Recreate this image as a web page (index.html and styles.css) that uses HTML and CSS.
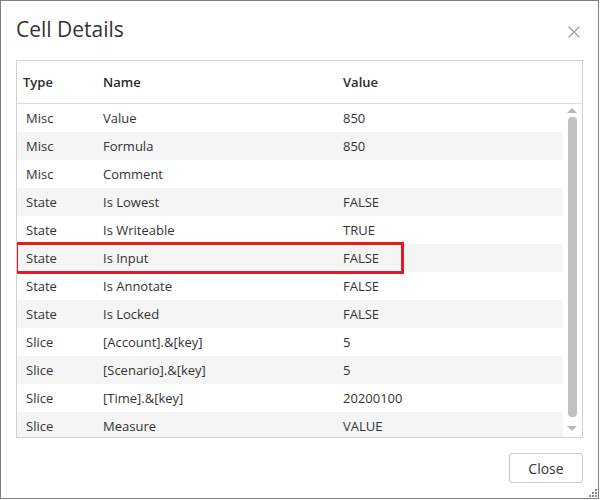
FILE: index.html
```
<!DOCTYPE html>
<html>
<head>
<meta charset="utf-8">
<link rel="stylesheet" href="styles.css">
</head>
<body>
<div class="dialog">
  <div class="dialog-header">
    <h1 class="title">Cell Details</h1>
    <button class="close-x" aria-label="Close">
      <svg width="12" height="12" viewBox="0 0 12 12"><path d="M0.5 0.5 L11.5 11.5 M11.5 0.5 L0.5 11.5" stroke="#9a9a9a" stroke-width="1.1" fill="none"/></svg>
    </button>
  </div>
  <div class="grid">
    <div class="grid-head">
      <div class="c-type">Type</div>
      <div class="c-name">Name</div>
      <div class="c-value">Value</div>
    </div>
    <div class="grid-body">
      <div class="rows">
        <div class="row"><div class="c-type">Misc</div><div class="c-name">Value</div><div class="c-value">850</div></div>
        <div class="row"><div class="c-type">Misc</div><div class="c-name">Formula</div><div class="c-value">850</div></div>
        <div class="row"><div class="c-type">Misc</div><div class="c-name">Comment</div><div class="c-value"></div></div>
        <div class="row"><div class="c-type">State</div><div class="c-name">Is Lowest</div><div class="c-value">FALSE</div></div>
        <div class="row"><div class="c-type">State</div><div class="c-name">Is Writeable</div><div class="c-value">TRUE</div></div>
        <div class="row"><div class="c-type">State</div><div class="c-name">Is Input</div><div class="c-value">FALSE</div></div>
        <div class="row"><div class="c-type">State</div><div class="c-name">Is Annotate</div><div class="c-value">FALSE</div></div>
        <div class="row"><div class="c-type">State</div><div class="c-name">Is Locked</div><div class="c-value">FALSE</div></div>
        <div class="row"><div class="c-type">Slice</div><div class="c-name">[Account].&amp;[key]</div><div class="c-value">5</div></div>
        <div class="row"><div class="c-type">Slice</div><div class="c-name">[Scenario].&amp;[key]</div><div class="c-value">5</div></div>
        <div class="row"><div class="c-type">Slice</div><div class="c-name">[Time].&amp;[key]</div><div class="c-value">20200100</div></div>
        <div class="row"><div class="c-type">Slice</div><div class="c-name">Measure</div><div class="c-value">VALUE</div></div>
      </div>
      <div class="scrollbar">
        <div class="arrow-up"></div>
        <div class="thumb"></div>
        <div class="arrow-down"></div>
      </div>
      <div class="highlight"></div>
    </div>
  </div>
  <div class="dialog-footer">
    <button class="btn">Close</button>
  </div>
  <svg class="grip" width="10" height="10" viewBox="0 0 10 10">
    <rect x="7" y="1" width="2" height="2" fill="#8a8a8a"/>
    <rect x="4" y="4" width="2" height="2" fill="#8a8a8a"/>
    <rect x="7" y="4" width="2" height="2" fill="#8a8a8a"/>
    <rect x="1" y="7" width="2" height="2" fill="#8a8a8a"/>
    <rect x="4" y="7" width="2" height="2" fill="#8a8a8a"/>
    <rect x="7" y="7" width="2" height="2" fill="#8a8a8a"/>
  </svg>
</div>
</body>
</html>
```
FILE: styles.css
```
html, body {
  margin: 0;
  padding: 0;
  background: #ffffff;
}
body {
  font-family: "Open Sans", "Noto Sans", Arial, sans-serif;
  color: #333333;
}
.dialog {
  position: relative;
  box-sizing: border-box;
  width: 599px;
  height: 499px;
  border: 1px solid #808080;
  background: #ffffff;
  display: flex;
  flex-direction: column;
  padding: 0 15px;
}
.dialog-header {
  height: 59px;
  display: flex;
  justify-content: space-between;
  align-items: flex-start;
  box-sizing: border-box;
  padding-top: 13px;
}
.title {
  margin: 0;
  font-size: 21px;
  font-weight: 400;
  line-height: 30px;
  color: #333333;
}
.close-x {
  border: 0;
  background: transparent;
  padding: 0;
  margin: 12px 3px 0 0;
  width: 12px;
  height: 12px;
  display: block;
}
.close-x svg { display: block; }
.grid {
  border: 1px solid #d2d2d2;
  display: flex;
  flex-direction: column;
  height: 378px;
  box-sizing: border-box;
}
.grid-head {
  height: 43px;
  box-sizing: border-box;
  border-bottom: 1px solid #dddddd;
  display: flex;
  align-items: center;
  font-weight: 600;
  font-size: 13px;
  color: #2b2b2b;
}
.grid-head .c-type { width: 80px; padding-left: 6px; }
.grid-head .c-name { width: 240px; }
.grid-body {
  position: relative;
  flex: 1;
  display: flex;
  overflow: hidden;
}
.rows {
  flex: 1;
}
.row {
  height: 28px;
  display: flex;
  align-items: center;
  font-size: 13px;
  color: #333333;
}
.row:nth-child(even) { background: #f5f5f5; }
.row .c-type { width: 77px; padding-left: 9px; }
.row .c-name { width: 240px; }
.scrollbar {
  width: 19px;
  display: flex;
  flex-direction: column;
  align-items: center;
  padding-top: 4px;
  box-sizing: border-box;
}
.arrow-up {
  width: 0; height: 0;
  border-left: 5px solid transparent;
  border-right: 5px solid transparent;
  border-bottom: 5px solid #b8b8b8;
  margin-left: -1px;
}
.thumb {
  margin-top: 4px;
  width: 9px;
  height: 300px;
  background: #c1c1c1;
  border-radius: 4px;
  margin-left: -1px;
}
.arrow-down {
  margin-top: 9px;
  width: 0; height: 0;
  border-left: 5px solid transparent;
  border-right: 5px solid transparent;
  border-top: 5px solid #b8b8b8;
  margin-left: -2px;
}
.highlight {
  position: absolute;
  left: -2px;
  top: 138px;
  width: 389px;
  height: 32px;
  box-sizing: border-box;
  border: 3px solid #e31b23;
  pointer-events: none;
}
.dialog-footer {
  flex: 1;
  display: flex;
  justify-content: flex-end;
  align-items: flex-start;
  padding-top: 15px;
}
.btn {
  width: 74px;
  height: 30px;
  border: 1px solid #c8c8c8;
  border-radius: 3px;
  background: #ffffff;
  font-family: "Open Sans", "Noto Sans", Arial, sans-serif;
  font-size: 14px;
  color: #333333;
  padding: 0;
}
.grip {
  position: absolute;
  right: 0;
  bottom: 0;
}
```
